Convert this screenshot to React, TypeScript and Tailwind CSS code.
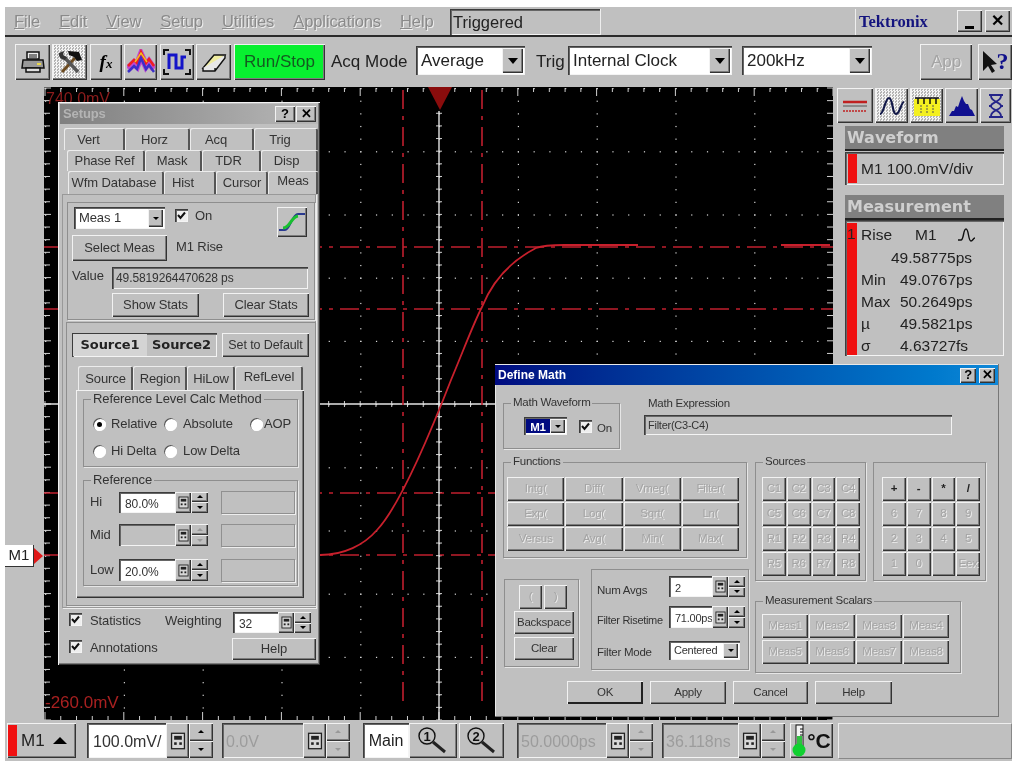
import type { ReactNode } from "react"

const raised = "bg-[#c0c0c0] shadow-[inset_1px_1px_0_#f2f2f2,inset_-1px_-1px_0_#333,inset_-2px_-2px_0_#7c7c7c]"
const sunken = "shadow-[inset_1px_1px_0_#3c3c3c,inset_2px_2px_0_#666,inset_-1px_-1px_0_#f4f4f4]"
const dim = "text-[#a4a4a4] [text-shadow:1px_1px_0_#ececec]"
const dither = "bg-[repeating-conic-gradient(#f4f4f4_0_25%,#b4b4b4_0_50%)] bg-[length:3px_3px]"

function Btn({ className = "", children }: { className?: string; children?: ReactNode }) {
  return <div className={`${raised} flex items-center justify-center shrink-0 ${className}`}>{children}</div>
}

function Up({ off }: { off?: boolean }) {
  return <div className={`w-0 h-0 border-x-[3px] border-x-transparent border-b-[3px] ${off ? "border-b-[#999]" : "border-b-black"}`} />
}

function Down({ off, big }: { off?: boolean; big?: boolean }) {
  return (
    <div
      className={`w-0 h-0 border-transparent ${big ? "border-x-[5px] border-t-[6px]" : "border-x-[3px] border-t-[3px]"} ${
        off ? "border-t-[#999]" : "border-t-black"
      }`}
    />
  )
}

function Keypad({ size = 12 }: { size?: number }) {
  return (
    <svg width={size} height={size + 2} viewBox="0 0 12 14">
      <rect x="1" y="1" width="10" height="12" fill="#d8d8d8" stroke="#222" />
      <rect x="3" y="3" width="6" height="3" fill="#222" />
      <rect x="3" y="8" width="2" height="2" fill="#222" />
      <rect x="7" y="8" width="2" height="2" fill="#222" />
    </svg>
  )
}

function Spin({
  className = "",
  value,
  big,
  off,
  gray,
  text = "text-[12px]",
}: {
  className?: string
  value: string
  big?: boolean
  off?: boolean
  gray?: boolean
  text?: string
}) {
  return (
    <div className={`flex shrink-0 ${sunken} ${className}`}>
      <div className={`flex-1 min-w-0 overflow-hidden whitespace-nowrap flex items-center pt-[2px] pl-[4px] ${text} ${gray ? "text-[#9c9c9c]" : "bg-white text-[#333] ml-[2px] mt-[2px] mb-[1px]"}`}>
        {value}
      </div>
      <Btn className={big ? "w-[23px]" : "w-[16px]"}>
        <Keypad size={big ? 16 : 11} />
      </Btn>
      <div className={`flex flex-col shrink-0 ${big ? "w-[24px]" : "w-[17px]"}`}>
        <Btn className="flex-1"><Up off={off} /></Btn>
        <Btn className="flex-1"><Down off={off} /></Btn>
      </div>
    </div>
  )
}

function Combo({
  className = "",
  value,
  big,
  text = "text-[13px]",
}: {
  className?: string
  value: string
  big?: boolean
  text?: string
}) {
  return (
    <div className={`flex shrink-0 bg-white ${sunken} ${className}`}>
      <div className={`flex-1 min-w-0 flex items-center pl-[5px] whitespace-nowrap ${text}`}>{value}</div>
      <Btn className={`m-[2px] ${big ? "w-[21px]" : "w-[15px]"}`}>
        <Down big={big} />
      </Btn>
    </div>
  )
}

function Group({ className = "", legend, children }: { className?: string; legend?: string; children?: ReactNode }) {
  return (
    <div className={`relative border border-[#8e8e8e] shadow-[1px_1px_0_#e6e6e6] shrink-0 ${className}`}>
      {legend && <div className="absolute -top-[9px] left-[7px] bg-[#c0c0c0] px-[2px] leading-[15px] whitespace-nowrap">{legend}</div>}
      {children}
    </div>
  )
}

function Check({ className = "" }: { className?: string }) {
  return (
    <div className={`w-[13px] h-[13px] shrink-0 bg-[#eee] ${sunken} flex items-center justify-center ${className}`}>
      <svg width="9" height="9" viewBox="0 0 9 9">
        <path d="M1 4 L3.5 7 L8 1.5" fill="none" stroke="#111" strokeWidth="2" />
      </svg>
    </div>
  )
}

function Radio({ on, className = "" }: { on?: boolean; className?: string }) {
  return (
    <div className={`w-[13px] h-[13px] rounded-full bg-white shrink-0 shadow-[inset_1px_1px_0_#555,inset_-1px_-1px_0_#fff] flex items-center justify-center ${className}`}>
      {on && <div className="w-[5px] h-[5px] rounded-full bg-black" />}
    </div>
  )
}

function TitleBtn({ label, className = "" }: { label: string; className?: string }) {
  return <Btn className={`font-bold text-[13px] text-black ${className}`}>{label}</Btn>
}

function Tab({ label, className = "", active }: { label: string; className?: string; active?: boolean }) {
  return (
    <div
      className={`flex items-center justify-center shrink-0 whitespace-nowrap rounded-t-[2px] shadow-[inset_1px_1px_0_#ececec,inset_-2px_0_0_#555] ${
        active ? "bg-[#c4c4c4] pb-[3px]" : "pt-[1px]"
      } ${className}`}
    >
      {label}
    </div>
  )
}

/* ---------- toolbar and side icons ---------- */

function PrinterIcon() {
  return (
    <svg width="26" height="26" viewBox="0 0 26 26">
      <path d="M7 3h12v7H7z" fill="#eee" stroke="#111" strokeWidth="1.5" />
      <path d="M3 11h20l1 8H2z" fill="#999" stroke="#111" strokeWidth="1.5" />
      <path d="M6 19h14v4H6z" fill="#ddd" stroke="#111" strokeWidth="1.5" />
      <path d="M9 6h8M9 8h8" stroke="#111" />
      <rect x="17" y="14" width="4" height="2" fill="#e8d64a" />
    </svg>
  )
}

function ToolsIcon() {
  return (
    <svg width="28" height="28" viewBox="0 0 28 28">
      <path d="M6 24 L19 10" stroke="#6b4a20" strokeWidth="3" />
      <path d="M12 3 L23 4 L26 12 L21 13 L18 9 L13 7z" fill="#111" />
      <path d="M22 24 L9 10" stroke="#555" strokeWidth="3.5" />
      <path d="M3 5 A6 6 0 0 0 9 12 L11 9 L7 7 L8 3z" fill="#333" />
    </svg>
  )
}

function RainbowIcon() {
  return (
    <svg width="28" height="26" viewBox="0 0 28 26">
      <path d="M1 20 L7 14 L10 17 L14 6 L19 17 L22 13 L27 20" fill="none" stroke="#c04ad0" strokeWidth="7" />
      <path d="M1 17 L7 11 L10 14 L14 3 L19 14 L22 10 L27 17" fill="none" stroke="#ee2020" strokeWidth="2.5" />
      <path d="M1 23 L7 17 L10 20 L14 9 L19 20 L22 16 L27 23" fill="none" stroke="#3a30c8" strokeWidth="2.5" />
      <path d="M8 13 L14 4 L20 13" fill="none" stroke="#f0c020" strokeWidth="1.5" />
    </svg>
  )
}

function CornersIcon() {
  return (
    <svg width="28" height="26" viewBox="0 0 28 26">
      <path d="M6 20 V6 H13 V19 H19 V8 H23" fill="none" stroke="#1414c8" strokeWidth="3" />
      <path d="M1 6 V1 H6 M22 1 H27 V6 M1 20 V25 H6 M22 25 H27 V20" fill="none" stroke="#111" strokeWidth="2" />
    </svg>
  )
}

function EraserIcon() {
  return (
    <svg width="26" height="22" viewBox="0 0 26 22">
      <path d="M2 17 L13 4 H24 L14 17z" fill="#f0eda0" stroke="#111" strokeWidth="1.4" />
      <path d="M2 17 V20 H14 L24 7 V4 M14 17 V20" fill="#e8e8e8" stroke="#111" strokeWidth="1.4" />
    </svg>
  )
}

function HelpArrow() {
  return (
    <div className="flex items-start">
      <svg width="15" height="24" viewBox="0 0 15 24">
        <path d="M1 1 V21 L6 16 L10 23 L13 21 L9 15 L15 14z" fill="#111" />
      </svg>
      <span className="font-['Liberation_Serif',serif] font-bold text-[24px] leading-[22px] text-[#10108a]">?</span>
    </div>
  )
}

function Magnifier({ n }: { n: string }) {
  return (
    <svg width="30" height="28" viewBox="0 0 30 28">
      <circle cx="9" cy="9" r="8" fill="none" stroke="#111" strokeWidth="1.4" />
      <text x="9" y="14" textAnchor="middle" fontSize="13" fontWeight="700" fontFamily="Liberation Sans" fill="#111">
        {n}
      </text>
      <path d="M15 15 L27 25" stroke="#222" strokeWidth="3" />
    </svg>
  )
}

function Thermo() {
  return (
    <svg width="14" height="33" viewBox="0 0 14 33">
      <rect x="4" y="1" width="7" height="23" fill="#f4f4f4" stroke="#111" />
      <rect x="5" y="12" width="5" height="12" fill="#30c040" />
      <path d="M8 5h3M8 8h3M8 11h3" stroke="#111" />
      <circle cx="7" cy="26" r="6.5" fill="#10d030" />
    </svg>
  )
}

function RightTabIcon({ kind }: { kind: number }) {
  if (kind === 0)
    return (
      <svg width="28" height="16" viewBox="0 0 28 16">
        <path d="M2 4h24" stroke="#c02020" strokeWidth="2.5" />
        <path d="M2 8h24" stroke="#555" />
        <path d="M2 13h24" stroke="#c02020" strokeWidth="1.5" strokeDasharray="2 1" />
      </svg>
    )
  if (kind === 1)
    return (
      <svg width="28" height="24" viewBox="0 0 28 24">
        <path d="M2 20 C6 20 7 4 11 4 C15 4 14 20 18 20 C22 20 23 8 26 8" fill="none" stroke="#111848" strokeWidth="2.2" />
      </svg>
    )
  if (kind === 2)
    return (
      <svg width="28" height="22" viewBox="0 0 28 22">
        <rect x="1" y="4" width="26" height="17" fill="#f4f020" />
        <path d="M2 3h24M5 3v6M11 3v6M17 3v6M23 3v6" stroke="#111" strokeWidth="1.5" />
        <path d="M8 10v9M14 10v9M20 10v9" stroke="#555" strokeDasharray="2 1" />
      </svg>
    )
  if (kind === 3)
    return (
      <svg width="28" height="22" viewBox="0 0 28 22">
        <path d="M1 21 L4 16 L6 16 L8 11 L10 12 L12 6 L14 1 L16 6 L18 9 L20 9 L22 14 L24 15 L27 21z" fill="#101090" />
      </svg>
    )
  return (
    <svg width="20" height="26" viewBox="0 0 20 26">
      <path d="M3 2h14M3 24h14M3 13h3M14 13h3" stroke="#25258a" strokeWidth="2" />
      <path d="M5 3 C5 9 15 9 15 13 C15 17 5 17 5 23 M15 3 C15 9 5 9 5 13 C5 17 15 17 15 23" fill="none" stroke="#25258a" strokeWidth="1.8" />
    </svg>
  )
}

/* ---------- scope display ---------- */

const XS = 78.8
const YS = 63.2
const W = 789
const H = 633
const steps = (n: number) => Array.from({ length: n }, (_, i) => i)

function ScopeDisplay() {
  const midX = 1 + XS * 5
  const midY = 1 + YS * 5
  return (
    <svg className="absolute inset-0" width={W} height={H} viewBox={`0 0 ${W} ${H}`}>
      {/* dots along each division */}
      {steps(11).map((r) =>
        steps(51).map((c) => (
          <rect key={`h${r}-${c}`} x={1 + (c * XS) / 5} y={1 + r * YS} width="1.2" height="1.2" fill="#d8d8d8" />
        ))
      )}
      {steps(11).map((c) =>
        steps(51).map((r) => (
          <rect key={`v${c}-${r}`} x={1 + c * XS} y={1 + (r * YS) / 5} width="1.2" height="1.2" fill="#d8d8d8" />
        ))
      )}
      {/* edge ticks */}
      {steps(51).map((i) => {
        const x = 1 + (i * XS) / 5
        const y = 1 + (i * YS) / 5
        const tall = i % 5 === 0 ? 8 : 4
        return (
          <g key={i} stroke="#d0d0d0" strokeWidth="1">
            <path d={`M${x} 1 V${1 + tall}`} />
            <path d={`M${x} ${H} V${H - tall}`} />
            <path d={`M0 ${y} H${tall === 8 ? 7 : 6}`} />
            <path d={`M${W} ${y} H${W - 6}`} />
            <path d={`M${midX - 3} ${y} H${midX + 3}`} />
            <path d={`M${x} ${midY - 3} V${midY + 3}`} />
          </g>
        )
      })}
      {/* centre cross */}
      <path d={`M${midX} 24 V${H} M0 ${midY} H${W}`} stroke="#e4e4e4" strokeWidth="1.4" />
      {/* cursors */}
      <g stroke="#c01f2e" strokeWidth="1.6" strokeDasharray="19 7 4 7" fill="none">
        <path d="M359 3 V620" />
        <path d="M438 3 V620" />
        <path d="M0 160 H789" />
        <path d="M0 222 H789" />
        <path d="M0 406 H789" />
        <path d="M0 468 H789" />
      </g>
      {/* waveform */}
      <path
        d="M276 468 C300 468 320 458 333 443 C350 425 375 375 407 293 C420 262 430 235 438 220 C448 195 465 175 492 161 C500 158 510 158 520 158 L594 158 M737 158 L786 158"
        fill="none"
        stroke="#c8202c"
        strokeWidth="1.8"
      />
      <path d="M384 0 H408 L396 23z" fill="#8a0c0c" />
    </svg>
  )
}

/* ---------- Setups window ---------- */

function SetupsWindow() {
  return (
    <div className={`absolute left-[14px] top-[15px] w-[262px] h-[563px] z-10 px-[4px] pt-[2px] text-[13px] text-[#333] tracking-[-0.1px] ${raised}`}>
      <div className="h-[20px] -mx-[2px] flex items-center justify-between pl-[3px] pr-[2px] bg-gradient-to-r from-[#808080] to-[#b8b8b8]">
        <span className="font-bold text-[#b4b4b4]">Setups</span>
        <div className="flex gap-[1px]">
          <TitleBtn label="?" className="w-[20px] h-[16px]" />
          <TitleBtn label="✕" className="w-[20px] h-[16px]" />
        </div>
      </div>

      <div className="mt-[4px]">
        <div className="flex h-[22px] ml-[2px]">
          <Tab label="Vert" className="w-[61px] pr-[12px]" />
          <Tab label="Horz" className="w-[65px] pr-[6px]" />
          <Tab label="Acq" className="w-[64px] pr-[12px]" />
          <Tab label="Trig" className="w-[64px] pr-[12px]" />
        </div>
        <div className="flex h-[21px] ml-[5px]">
          <Tab label="Phase Ref" className="w-[78px] pr-[3px]" />
          <Tab label="Mask" className="w-[57px] pr-[3px]" />
          <Tab label="TDR" className="w-[59px] pr-[6px]" />
          <Tab label="Disp" className="w-[57px] pr-[6px]" />
        </div>
        <div className="flex h-[23px] ml-[6px]">
          <Tab label="Wfm Database" className="w-[96px] pr-[4px]" />
          <Tab label="Hist" className="w-[52px] pr-[14px]" />
          <Tab label="Cursor" className="w-[52px]" />
          <Tab label="Meas" className="w-[50px]" active />
        </div>
      </div>

      <div className="border border-[#999] shadow-[1px_1px_0_#eee] h-[414px] pt-[7px] pl-[4px] pr-[2px]">
        <Group className="w-[248px] h-[118px] px-[4px] pt-[4px]">
          <div className="flex items-start h-[28px]">
            <Combo value="Meas 1" className="w-[91px] h-[22px] ml-[2px]" />
            <Check className="ml-[10px] mt-[2px]" />
            <span className="ml-[7px] -mt-[1px]">On</span>
            <div className={`ml-auto mr-[3px] w-[30px] h-[30px] ${raised} flex items-center justify-center`}>
              <svg width="28" height="26" viewBox="0 0 28 26">
                <path d="M1 21 H7 C12 21 14 5 20 5 H27" fill="none" stroke="#2a3a90" strokeWidth="2" />
                <path d="M5 19 C12 19 13 8 20 7" fill="none" stroke="#18c030" strokeWidth="3" />
              </svg>
            </div>
          </div>
          <div className="flex items-center h-[26px]">
            <Btn className="w-[95px] h-[26px]">Select Meas</Btn>
            <span className="ml-[9px] -mt-[3px]">M1 Rise</span>
          </div>
          <div className="flex items-center mt-[6px] h-[22px]">
            <span className="w-[40px] -mt-[4px]">Value</span>
            <div className={`w-[196px] h-[22px] pl-[4px] flex items-center whitespace-nowrap text-[12px] ${sunken}`}>49.5819264470628 ps</div>
          </div>
          <div className="flex mt-[4px] ml-[40px] gap-[24px]">
            <Btn className="w-[87px] h-[24px]">Show Stats</Btn>
            <Btn className="w-[86px] h-[24px]">Clear Stats</Btn>
          </div>
        </Group>

        <Group className="w-[250px] h-[284px] -ml-[1px] mt-[2px] pt-[10px] pl-[5px]">
          <div className="flex h-[24px]">
            <div className={`flex ${sunken} p-[1px]`}>
              <div className="w-[74px] flex items-center justify-center font-['DejaVu_Sans',sans-serif] font-bold text-[13px] bg-[#d4d4d4] text-[#222]">Source1</div>
              <div className="w-[69px] flex items-center justify-center font-['DejaVu_Sans',sans-serif] font-bold text-[13px] text-[#222]">Source2</div>
            </div>
            <Btn className="w-[87px] ml-[5px] text-[12.5px]">Set to Default</Btn>
          </div>
          <div className="flex h-[24px] mt-[9px] ml-[6px]">
            <Tab label="Source" className="w-[55px]" />
            <Tab label="Region" className="w-[54px]" />
            <Tab label="HiLow" className="w-[48px]" />
            <Tab label="RefLevel" className="w-[68px]" active />
          </div>
          <div className={`w-[228px] h-[208px] ml-[4px] px-[7px] pt-[9px] ${raised}`}>
            <Group legend="Reference Level Calc Method" className="w-[215px] h-[68px] pt-[15px] pl-[9px]">
              <div className="flex items-center h-[18px]">
                <Radio on />
                <span className="ml-[5px] w-[53px]">Relative</span>
                <Radio />
                <span className="ml-[6px] w-[67px]">Absolute</span>
                <Radio />
                <span className="ml-[1px]">AOP</span>
              </div>
              <div className="flex items-center h-[18px] mt-[9px]">
                <Radio />
                <span className="ml-[5px] w-[53px]">Hi Delta</span>
                <Radio />
                <span className="ml-[6px]">Low Delta</span>
              </div>
            </Group>
            <Group legend="Reference" className="w-[215px] h-[106px] mt-[13px] pt-[10px] pl-[6px]">
              <div className="flex items-center h-[22px]">
                <span className="w-[29px]">Hi</span>
                <Spin value="80.0%" className="w-[89px] h-[21px]" />
                <div className="w-[74px] h-[23px] ml-[13px] border border-[#909090] shadow-[1px_1px_0_#eee]" />
              </div>
              <div className="flex items-center h-[22px] mt-[11px]">
                <span className="w-[29px]">Mid</span>
                <Spin value="" gray off className="w-[89px] h-[22px]" />
                <div className="w-[74px] h-[23px] ml-[13px] border border-[#909090] shadow-[1px_1px_0_#eee]" />
              </div>
              <div className="flex items-center h-[22px] mt-[13px]">
                <span className="w-[29px]">Low</span>
                <Spin value="20.0%" className="w-[89px] h-[22px]" />
                <div className="w-[74px] h-[23px] ml-[13px] border border-[#909090] shadow-[1px_1px_0_#eee]" />
              </div>
            </Group>
          </div>
        </Group>
      </div>

      <div className="flex items-start h-[22px] mt-[4px] ml-[7px]">
        <Check className="mt-[1px]" />
        <span className="ml-[8px] w-[75px] -mt-[1px]">Statistics</span>
        <span className="w-[68px] -mt-[1px]">Weighting</span>
        <Spin value="32" className="w-[78px] h-[21px]" />
      </div>
      <div className="flex items-start h-[22px] mt-[4px] ml-[7px]">
        <Check className="mt-[2px]" />
        <span className="ml-[8px] w-[143px]">Annotations</span>
        <Btn className="w-[84px] h-[22px]">Help</Btn>
      </div>
    </div>
  )
}

/* ---------- Define Math dialog ---------- */

const functionKeys = ["Intg(", "Diff(", "Vmeg(", "Filter(", "Exp(", "Log(", "Sqrt(", "Ln(", "Versus", "Avg(", "Min(", "Max("]
const sourceKeys = ["C1", "C2", "C3", "C4", "C5", "C6", "C7", "C8", "R1", "R2", "R3", "R4", "R5", "R6", "R7", "R8"]
const padKeys = ["+", "-", "*", "/", "6", "7", "8", "9", "2", "3", "4", "5", "1", "0", "", "Eex"]
const scalarKeys = ["Meas1", "Meas2", "Meas3", "Meas4", "Meas5", "Meas6", "Meas7", "Meas8"]

function DefineMathDialog() {
  return (
    <div className="absolute left-[451px] top-[277px] w-[504px] h-[353px] z-20 bg-[#c0c0c0] border-r border-b border-[#777] shadow-[inset_1px_1px_0_#e8e8e8] text-[11.5px] text-[#333] tracking-[-0.25px]">
      <div className="h-[20px] mt-[1px] flex items-center justify-between pl-[3px] pr-[3px] bg-gradient-to-r from-[#000a80] to-[#1088d8]">
        <span className="font-bold text-white text-[12px] tracking-normal">Define Math</span>
        <div className="flex gap-[3px]">
          <TitleBtn label="?" className="w-[16px] h-[15px]" />
          <TitleBtn label="✕" className="w-[16px] h-[15px]" />
        </div>
      </div>

      <div className="pl-[8px]">
        <div className="flex mt-[18px] h-[46px]">
          <Group legend="Math Waveform" className="w-[117px] h-[46px] flex items-start pt-[13px] pl-[20px]">
            <div className={`flex w-[43px] h-[18px] bg-white ${sunken} p-[2px]`}>
              <span className="w-[24px] bg-[#000a80] text-white text-center font-bold">M1</span>
              <Btn className="flex-1"><Down /></Btn>
            </div>
            <Check className="ml-[12px] mt-[3px]" />
            <span className="ml-[5px] mt-[3px]">On</span>
          </Group>
          <div className="ml-[24px] -mt-[7px]">
            <div className="ml-[4px] leading-[15px]">Math Expression</div>
            <div className={`w-[308px] h-[20px] mt-[4px] pl-[4px] flex items-center text-[11px] ${sunken}`}>Filter(C3-C4)</div>
          </div>
        </div>

        <div className="flex mt-[13px]">
          <div className="w-[252px]">
            <Group legend="Functions" className="w-[244px] h-[96px] pt-[14px] pl-[3px]">
              <div className="grid grid-cols-4 gap-x-[1px] auto-rows-[24px] gap-y-[1px] w-[232px]">
                {functionKeys.map((k) => (
                  <Btn key={k} className={dim}>{k}</Btn>
                ))}
              </div>
            </Group>
            <div className="flex items-start mt-[11px]">
              <Group className="w-[75px] h-[88px] mt-[10px] ml-[1px] pl-[9px] pt-[5px]">
                <div className="flex gap-[2px] ml-[5px]">
                  <Btn className={`w-[23px] h-[24px] ${dim}`}>(</Btn>
                  <Btn className={`w-[23px] h-[24px] ${dim}`}>)</Btn>
                </div>
                <Btn className="w-[60px] h-[23px] mt-[2px]">Backspace</Btn>
                <Btn className="w-[60px] h-[23px] mt-[3px]">Clear</Btn>
              </Group>
              <Group className="w-[158px] h-[101px] ml-[12px] pl-[5px] pt-[6px]">
                <div className="flex items-center h-[21px]">
                  <span className="w-[72px] mt-[8px]">Num Avgs</span>
                  <Spin value="2" text="text-[11px]" className="w-[76px] h-[21px]" />
                </div>
                <div className="flex items-center h-[22px] mt-[9px]">
                  <span className="w-[72px] whitespace-nowrap mt-[6px] text-[11px] tracking-[-0.3px]">Filter Risetime</span>
                  <Spin value="71.00ps" text="text-[11px]" className="w-[76px] h-[22px]" />
                </div>
                <div className="flex items-center h-[19px] mt-[13px]">
                  <span className="w-[72px] mt-[5px]">Filter Mode</span>
                  <Combo value="Centered" text="text-[11px]" className="w-[71px] h-[19px]" />
                </div>
              </Group>
            </div>
          </div>

          <div>
            <div className="flex">
              <Group legend="Sources" className="w-[111px] h-[119px] pt-[14px] pl-[6px]">
                <div className="grid grid-cols-4 gap-[1px] auto-rows-[24px] w-[98px]">
                  {sourceKeys.map((k) => (
                    <Btn key={k} className={dim}>{k}</Btn>
                  ))}
                </div>
              </Group>
              <Group className="w-[113px] h-[119px] ml-[7px] pt-[14px] pl-[8px]">
                <div className="grid grid-cols-4 gap-[1px] auto-rows-[24px] w-[98px]">
                  {padKeys.map((k, i) => (
                    <Btn key={i} className={i < 4 ? "font-bold text-[#222]" : dim}>{k}</Btn>
                  ))}
                </div>
              </Group>
            </div>
            <Group legend="Measurement Scalars" className="w-[206px] h-[72px] mt-[20px] pt-[12px] pl-[6px]">
              <div className="grid grid-cols-4 gap-x-[1px] gap-y-[2px] auto-rows-[24px] w-[187px]">
                {scalarKeys.map((k) => (
                  <Btn key={k} className={dim}>{k}</Btn>
                ))}
              </div>
            </Group>
          </div>
        </div>

        <div className="flex gap-[7px] mt-[8px] ml-[64px]">
          <Btn className="w-[76px] h-[23px] shadow-[inset_1px_1px_0_#f2f2f2,inset_-2px_-2px_0_#222]">OK</Btn>
          <Btn className="w-[76px] h-[23px]">Apply</Btn>
          <Btn className="w-[75px] h-[23px]">Cancel</Btn>
          <Btn className="w-[77px] h-[23px]">Help</Btn>
        </div>
      </div>
    </div>
  )
}

/* ---------- right readout panel ---------- */

function SideHeader({ title }: { title: string }) {
  return (
    <div className="h-[25px] bg-[#808080] border-b-2 border-[#222] pl-[2px] flex items-center font-['DejaVu_Sans',sans-serif] font-bold text-[16px] text-[#cfcfcf]">
      {title}
    </div>
  )
}

function ReadoutPanel() {
  const rows = [
    ["Min", "49.0767ps"],
    ["Max", "50.2649ps"],
    ["µ", "49.5821ps"],
    ["σ", "4.63727fs"],
  ]
  return (
    <div className="w-[179px] shrink-0 pt-[3px]">
      <div className="flex gap-[2px] pl-[4px] h-[35px]">
        <Btn className="w-[36px]"><RightTabIcon kind={0} /></Btn>
        <Btn className={`w-[33px] ${dither}`}><RightTabIcon kind={1} /></Btn>
        <Btn className={`w-[33px] ${dither}`}><RightTabIcon kind={2} /></Btn>
        <Btn className="w-[33px]"><RightTabIcon kind={3} /></Btn>
        <Btn className="w-[31px]"><RightTabIcon kind={4} /></Btn>
      </div>
      <div className="ml-[12px] w-[159px] mt-[3px]">
        <SideHeader title="Waveform" />
        <div className={`h-[33px] mt-[1px] flex items-center pl-[3px] ${sunken} text-[15.5px] text-[#222]`}>
          <div className="w-[9px] h-[29px] bg-[#f01010]" />
          <span className="ml-[4px] whitespace-nowrap">M1 100.0mV/div</span>
        </div>
        <div className="mt-[10px]">
          <SideHeader title="Measurement" />
        </div>
        <div className={`relative h-[136px] flex pl-[2px] pt-[3px] ${sunken} text-[15.5px] text-[#222]`}>
          <div className="w-[10px] h-[132px] bg-[#f01010] text-[#222] leading-[22px]">1</div>
          <div className="ml-[4px] flex-1 pt-[1px]">
            <div className="flex items-center h-[22px]">
              <span className="w-[54px]">Rise</span>
              <span className="w-[42px]">M1</span>
              <svg width="20" height="18" viewBox="0 0 20 18">
                <path d="M1 14 H4 C7 14 6 3 9 3 C12 3 11 15 14 15 C16 15 16 12 18 12" fill="none" stroke="#111" strokeWidth="1.4" />
              </svg>
            </div>
            <div className="h-[22px] pl-[30px]">49.58775ps</div>
            {rows.map(([k, v]) => (
              <div key={k} className="flex h-[22px]">
                <span className="w-[39px]">{k}</span>
                <span>{v}</span>
              </div>
            ))}
          </div>
        </div>
      </div>
    </div>
  )
}

/* ---------- page ---------- */

export default function App() {
  const menu = ["File", "Edit", "View", "Setup", "Utilities", "Applications", "Help"]
  return (
    <div className="w-[1017px] h-[765px] bg-white pt-[7px] pl-[5px] overflow-hidden blur-[0.4px] font-['Liberation_Sans',Arial,sans-serif]">
      <div className="w-[1007px] h-[754px] bg-[#c0c0c0] flex flex-col">
        {/* menu bar */}
        <div className="h-[30px] flex border-b-2 border-[#2a2a2a] shrink-0 text-[16.5px]">
          <div className="w-[445px] flex items-center gap-[19px] pl-[9px] text-[#8a8a8a] tracking-[-0.1px] [text-shadow:1px_1px_0_#eee]">
            {menu.map((m) => (
              <span key={m}>
                <span className="underline">{m[0]}</span>
                {m.slice(1)}
              </span>
            ))}
          </div>
          <div className={`w-[150px] h-[26px] mt-[2px] pl-[3px] flex items-center text-[#222] shadow-[inset_1px_1px_0_#3c3c3c,inset_2px_2px_0_#666,inset_0_-1px_0_#f4f4f4]`}>Triggered</div>
          <div className="w-[255px] h-[26px] mt-[2px] border-l border-[#eee]" />
          <div className="w-[95px] h-[26px] mt-[2px] pl-[3px] flex items-center border-l border-[#eee] font-['Liberation_Serif',serif] font-bold text-[16.5px] text-[#14147e]">Tektronix</div>
          <Btn className="w-[25px] h-[22px] ml-[7px] mt-[3px] items-end! pb-[3px]">
            <div className="w-[9px] h-[3px] bg-black" />
          </Btn>
          <Btn className="w-[25px] h-[22px] ml-[3px] mt-[3px] text-[16px] font-bold">✕</Btn>
        </div>

        {/* toolbar */}
        <div className="h-[48px] shrink-0 flex items-start pl-[10px] pt-[7px] text-[17px] text-[#222]">
          <Btn className="w-[35px] h-[36px]"><PrinterIcon /></Btn>
          <Btn className={`w-[35px] h-[36px] ml-[2px] ${dither}`}><ToolsIcon /></Btn>
          <Btn className="w-[32px] h-[36px] ml-[3px] font-['Liberation_Serif',serif] italic font-bold text-[19px] text-black">
            f<span className="text-[13px] mt-[3px]">x</span>
          </Btn>
          <Btn className="w-[33px] h-[36px] ml-[2px]"><RainbowIcon /></Btn>
          <Btn className="w-[34px] h-[36px] ml-[3px]"><CornersIcon /></Btn>
          <Btn className="w-[35px] h-[36px] ml-[2px]"><EraserIcon /></Btn>
          <Btn className="w-[91px] h-[36px] ml-[3px] bg-[#08f030]! text-[#145a20]">Run/Stop</Btn>
          <span className="ml-[6px] w-[79px] h-[36px] leading-[36px] whitespace-nowrap">Acq Mode</span>
          <Combo value="Average" big text="text-[17px]" className="w-[109px] h-[29px] ml-[6px] mt-[2px]" />
          <span className="ml-[11px] w-[27px] leading-[36px]">Trig</span>
          <Combo value="Internal Clock" big text="text-[17px]" className="w-[164px] h-[29px] ml-[5px] mt-[2px]" />
          <Combo value="200kHz" big text="text-[17px]" className="w-[130px] h-[29px] ml-[10px] mt-[2px]" />
          <Btn className={`w-[52px] h-[36px] ml-[48px] ${dim}`}>App</Btn>
          <Btn className="w-[34px] h-[36px] ml-[6px]"><HelpArrow /></Btn>
        </div>

        {/* scope area */}
        <div className="relative flex h-[635px] shrink-0">
          <div className="w-[39px] shrink-0" />
          <div className="relative w-[789px] h-[633px] mt-[2px] shrink-0 bg-black">
            <ScopeDisplay />
            <span className="absolute left-[2px] top-0 text-[16px] text-[#8c1c1c]">740.0mV</span>
            <span className="absolute left-[1px] bottom-[5px] text-[17px] text-[#a82020]">-260.0mV</span>
            <SetupsWindow />
            <DefineMathDialog />
          </div>
          <div className="absolute left-0 top-[460px] flex items-center">
            <div className="w-[29px] h-[22px] bg-white border-r border-b border-[#333] text-[15px] text-[#222] flex items-center justify-center">M1</div>
            <div className="w-0 h-0 border-y-[8px] border-y-transparent border-l-[9px] border-l-[#e01818]" />
          </div>
          <ReadoutPanel />
        </div>

        {/* bottom bar */}
        <div className="flex h-[41px] shrink-0 pl-[2px] pt-[3px] text-[16px] text-[#222]">
          <div className={`w-[69px] h-[35px] flex items-center pl-[1px] ${raised}`}>
            <div className="w-[9px] h-[31px] bg-[#f01010]" />
            <span className="ml-[4px] text-[17px]">M1</span>
            <div className="ml-[8px] w-0 h-0 border-x-[7px] border-x-transparent border-b-[7px] border-b-black" />
          </div>
          <Spin big value="100.0mV/" text="text-[16px]" className="w-[126px] h-[35px] ml-[11px]" />
          <Spin big off gray value="0.0V" text="text-[16px]" className="w-[128px] h-[35px] ml-[9px]" />
          <div className={`w-[46px] h-[35px] ml-[13px] bg-white flex items-center justify-center ${sunken}`}>Main</div>
          <Btn className="w-[48px] h-[35px]"><Magnifier n="1" /></Btn>
          <Btn className="w-[45px] h-[35px] ml-[2px]"><Magnifier n="2" /></Btn>
          <Spin big off gray value="50.0000ps" text="text-[16px]" className="w-[136px] h-[35px] ml-[13px]" />
          <Spin big off gray value="36.118ns" text="text-[16px]" className="w-[123px] h-[35px] ml-[9px]" />
          <Btn className="w-[43px] h-[35px] ml-[5px] gap-[1px]">
            <Thermo />
            <span className="font-bold text-[21px] text-[#111] leading-none">°C</span>
          </Btn>
          <div className="w-[174px] h-[36px] ml-[5px] border border-t-[#eee] border-l-[#eee] border-r-[#888] border-b-[#888]" />
        </div>
      </div>
    </div>
  )
}
